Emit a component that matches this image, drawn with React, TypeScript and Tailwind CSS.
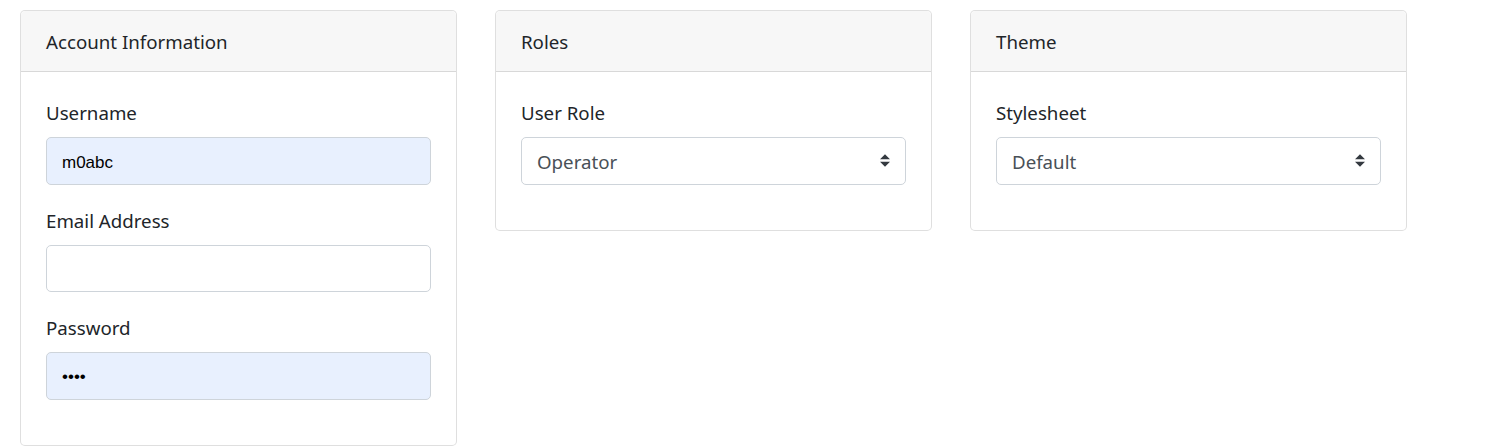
import React from "react";

const font = { fontFamily: '"Noto Sans", "Open Sans", sans-serif' };

function Card({ title, children }: { title: string; children: React.ReactNode }) {
  return (
    <div className="w-[437px] shrink-0 rounded-[5px] border border-[rgba(0,0,0,0.125)] bg-white">
      <div className="rounded-t-[5px] border-b border-[rgba(0,0,0,0.125)] bg-[#f7f7f7] px-[25px] pt-[16px] pb-[14px] text-[18.7px] leading-[30px] text-[#212529]">
        {title}
      </div>
      <div className="p-[25px]">{children}</div>
    </div>
  );
}

function Label({ children }: { children: React.ReactNode }) {
  return <div className="mb-[8px] text-[18.7px] leading-[32px] text-[#212529]">{children}</div>;
}

function Input({ value, filled, dots }: { value?: string; filled?: boolean; dots?: boolean }) {
  return (
    <div
      className={
        "flex h-[47.5px] items-center rounded-[5px] border border-[#ced4da] px-[15px] text-[17px] text-black " +
        (filled ? "bg-[#e8f0fe]" : "bg-white")
      }
      style={{ fontFamily: '"Liberation Sans", Arial, sans-serif' }}
    >
      <span className={dots ? "pt-[1px]" : "pt-[3px]"}>{value}</span>
    </div>
  );
}

function Select({ value }: { value: string }) {
  return (
    <div className="flex h-[47.5px] items-center justify-between rounded-[5px] border border-[#ced4da] bg-white pl-[15px] pr-[15px] text-[18.7px] text-[#495057]">
      <span className="pt-[2px]">{value}</span>
      <svg width="10" height="13" viewBox="0 0 4 5">
        <path d="M2 0L0 2h4zm0 5L0 3h4z" fill="#343a40" />
      </svg>
    </div>
  );
}

export default function App() {
  return (
    <div className="flex items-start gap-[38px] bg-white pl-[20px] pt-[10px]" style={font}>
      <Card title="Account Information">
        <Label>Username</Label>
        <Input value="m0abc" filled />
        <div className="h-[20px]" />
        <Label>Email Address</Label>
        <Input />
        <div className="h-[20px]" />
        <Label>Password</Label>
        <Input value="••••" filled dots />
        <div className="h-[20px]" />
      </Card>
      <Card title="Roles">
        <Label>User Role</Label>
        <Select value="Operator" />
        <div className="h-[20px]" />
      </Card>
      <Card title="Theme">
        <Label>Stylesheet</Label>
        <Select value="Default" />
        <div className="h-[20px]" />
      </Card>
    </div>
  );
}
